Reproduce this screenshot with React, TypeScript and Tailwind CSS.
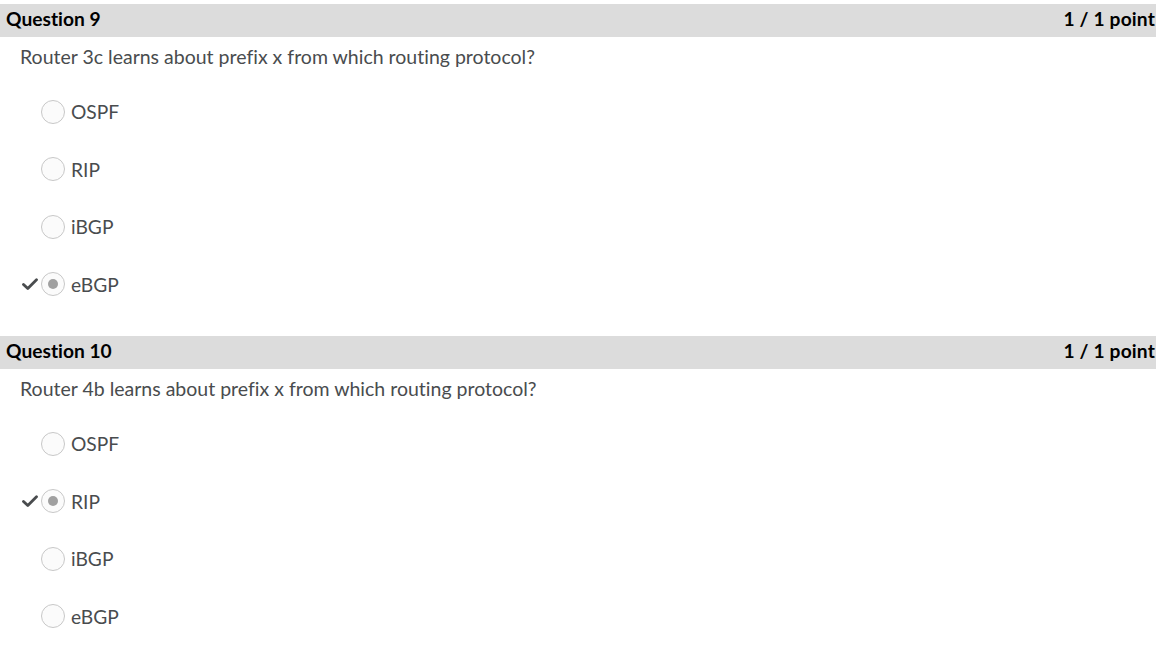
import React from "react";

type Question = {
  title: string;
  score: string;
  prompt: string;
  options: string[];
  answer: number;
};

const questions: Question[] = [
  {
    title: "Question 9",
    score: "1 / 1 point",
    prompt: "Router 3c learns about prefix x from which routing protocol?",
    options: ["OSPF", "RIP", "iBGP", "eBGP"],
    answer: 3,
  },
  {
    title: "Question 10",
    score: "1 / 1 point",
    prompt: "Router 4b learns about prefix x from which routing protocol?",
    options: ["OSPF", "RIP", "iBGP", "eBGP"],
    answer: 1,
  },
];

const CheckMark: React.FC = () => (
  <svg width="16" height="13" viewBox="0 0 16 13" fill="none">
    <path
      d="M1.5 6.5 L5.8 10.6 L14.5 1.8"
      stroke="#494c4e"
      strokeWidth="2.8"
      strokeLinecap="round"
      strokeLinejoin="round"
    />
  </svg>
);

const Option: React.FC<{ label: string; selected: boolean }> = ({ label, selected }) => (
  <div className="flex h-[57.5px] items-center pl-[22px]">
    <div className="flex w-[19px] items-center">{selected && <CheckMark />}</div>
    <div className="flex h-[24px] w-[24px] items-center justify-center rounded-full border border-[#c8c8c8] bg-[#fbfbfb]">
      {selected && <div className="h-[10px] w-[10px] rounded-full bg-[#a0a0a0]" />}
    </div>
    <span className="ml-[6px] text-[19.2px] leading-[27px] text-[#494c4e]">{label}</span>
  </div>
);

export default function App() {
  return (
    <div
      className="min-h-screen bg-white pt-[4px] [font-variant-ligatures:none]"
      style={{ fontFamily: "Lato, 'Open Sans', sans-serif" }}
    >
      {questions.map((q) => (
        <section key={q.title} className="mb-[23px]">
          <div className="flex h-[33px] items-center justify-between bg-[#dcdcdc] pb-[2px] pl-[6px] pr-[1px]">
            <span className="text-[19.2px] font-bold text-black">{q.title}</span>
            <span className="text-[19.2px] font-bold tracking-[0.15px] text-black">{q.score}</span>
          </div>
          <p className="mt-[6px] pl-[20px] text-[19.5px] leading-[27px] text-[#494c4e]">{q.prompt}</p>
          <div className="mt-[13px]">
            {q.options.map((opt, i) => (
              <Option key={opt} label={opt} selected={i === q.answer} />
            ))}
          </div>
        </section>
      ))}
    </div>
  );
}
